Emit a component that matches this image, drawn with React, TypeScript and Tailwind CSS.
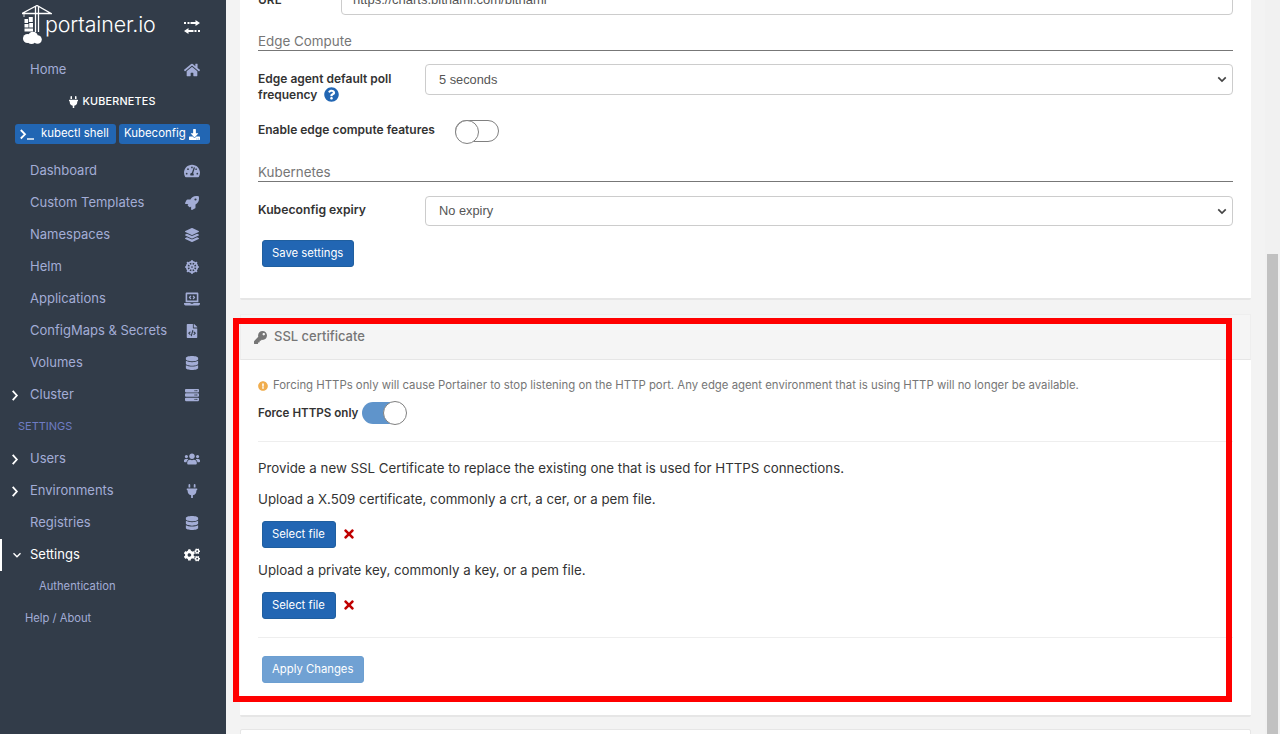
import type { ReactNode } from "react";
import {
    FaCogs,
    FaDatabase,
    FaDharmachakra,
    FaDownload,
    FaExclamationCircle,
    FaFileCode,
    FaHome,
    FaKey,
    FaLaptopCode,
    FaLayerGroup,
    FaPlug,
    FaQuestionCircle,
    FaRocket,
    FaServer,
    FaTachometerAlt,
    FaTimes,
    FaUsers,
} from "react-icons/fa";

function Logo() {
    return (
        <div className="flex h-[54px] items-start">
            <svg viewBox="0 0 30 40" className="ml-[22px] mt-[5px] h-[40px] w-[30px] text-white">
                <path d="M0 8.500 15 .5l14 8H0Z" fill="none" stroke="currentColor" strokeWidth="1.300" />
                <path d="M13.500 1v26 M16.500 1v26" fill="none" stroke="currentColor" strokeWidth="1.300" />
                <path d="M2 9v3" stroke="currentColor" strokeWidth="0.800" />
                <path d="M2.500 14h3.500v4H2.500z M6.800 12h4v5h-4z M2.500 19h4v3.500h-4z M7.200 18h3.800v4.500H7.200z M2.500 23.500h8.500V26.500H2.500z" fill="currentColor" />
                <circle cx="5.500" cy="33.500" r="4.500" fill="currentColor" />
                <circle cx="11" cy="31.500" r="4.800" fill="currentColor" />
                <circle cx="15.500" cy="34.500" r="4.300" fill="currentColor" />
                <circle cx="9.500" cy="35" r="4" fill="currentColor" />
            </svg>
            <span className="ml-[-7px] mt-[11px] w-[114px] text-[21.400px] leading-[26px] font-light tracking-[-0.100px] text-white">
                portainer.io
            </span>
            <svg viewBox="0 0 16 14" className="ml-[25px] mt-[20px] h-[14px] w-[16px] text-white">
                <path d="M0 3h2 M3.500 3h2 M6.500 3h6 M3.500 11h6 M10.500 11h2 M14 11h2" stroke="currentColor" strokeWidth="2.200" />
                <path d="M11.500 0 16 3 11.500 6Z M4.500 8 0 11 4.500 14Z" fill="currentColor" />
            </svg>
        </div>
    );
}

function NavRow({
    label,
    icon,
    caret,
    active,
}: {
    label: string;
    icon: ReactNode;
    caret?: "right" | "down";
    active?: boolean;
}) {
    return (
        <div
            className={
                active
                    ? "relative flex h-8 items-center border-l-2 border-white pl-[28px] pr-[26px] text-[13px] text-white"
                    : "relative flex h-8 items-center pl-[30px] pr-[26px] text-[13px] text-[#a3add6]"
            }
        >
            {caret === "right" && (
                <svg viewBox="0 0 8 12" className="absolute left-[11px] h-[11px] w-[8px]">
                    <path d="M1.500 1 6 6l-4.500 5" fill="none" stroke="white" strokeWidth="2" />
                </svg>
            )}
            {caret === "down" && (
                <svg viewBox="0 0 10 8" className="absolute left-[10px] h-[7px] w-[10px]">
                    <path d="m1 1.500 4 4 4-4" fill="none" stroke="white" strokeWidth="1.600" />
                </svg>
            )}
            <span className="flex-1">{label}</span>
            <span className={active ? "flex w-4 justify-center text-white" : "flex w-4 justify-center text-[#a3add6]"}>{icon}</span>
        </div>
    );
}

function Sidebar() {
    const icon = "h-[14px] w-[14px] shrink-0";
    const wide = "h-4 w-4 shrink-0";
    return (
        <aside className="h-[734px] w-[226px] shrink-0 bg-[#323c49]">
            <Logo />
            <NavRow label="Home" icon={<FaHome className={wide} />} />
            <div className="flex h-8 items-center justify-center gap-[4px] pr-[1px] text-[10.800px] font-medium tracking-[0.200px] text-white">
                <FaPlug className="h-[12px] w-[9px]" />
                KUBERNETES
            </div>
            <div className="flex h-[37px] items-start gap-[3px] pl-[15px] pt-[6px]">
                <div className="flex h-[20px] w-[101px] items-center rounded-[3px] bg-[#2266b3] pl-[5px] text-[11.400px] text-white">
                    <svg viewBox="0 0 14 11" className="mr-[7px] h-[11px] w-[14px]">
                        <path d="m.8 1 4.200 4.300L.8 9.500" fill="none" stroke="white" strokeWidth="1.800" />
                        <path d="M7 10h7" stroke="white" strokeWidth="1.400" />
                    </svg>
                    kubectl shell
                </div>
                <div className="flex h-[20px] w-[91px] items-center rounded-[3px] bg-[#2266b3] pl-[5px] text-[11.400px] text-white">
                    Kubeconfig
                    <FaDownload className="ml-[3px] h-[11px] w-[11px]" />
                </div>
            </div>
            <NavRow label="Dashboard" icon={<FaTachometerAlt className={wide} />} />
            <NavRow label="Custom Templates" icon={<FaRocket className={icon} />} />
            <NavRow label="Namespaces" icon={<FaLayerGroup className={icon} />} />
            <NavRow label="Helm" icon={<FaDharmachakra className={icon} />} />
            <NavRow label="Applications" icon={<FaLaptopCode className={wide} />} />
            <NavRow label="ConfigMaps & Secrets" icon={<FaFileCode className={icon} />} />
            <NavRow label="Volumes" icon={<FaDatabase className={icon} />} />
            <NavRow label="Cluster" caret="right" icon={<FaServer className={icon} />} />
            <div className="flex h-8 items-center pb-[2px] pl-[18px] text-[11px] text-[#6f7cc4]">SETTINGS</div>
            <NavRow label="Users" caret="right" icon={<FaUsers className={wide} />} />
            <NavRow label="Environments" caret="right" icon={<FaPlug className={icon} />} />
            <NavRow label="Registries" icon={<FaDatabase className={icon} />} />
            <NavRow label="Settings" caret="down" active icon={<FaCogs className={wide} />} />
            <div className="flex h-8 items-center pb-[2px] pl-[39px] text-[11.200px] text-[#a3add6]">Authentication</div>
            <div className="flex h-8 items-center pb-[2px] pl-[25px] text-[11.200px] text-[#a3add6]">Help / About</div>
        </aside>
    );
}

function SectionTitle({ children, className }: { children: ReactNode; className: string }) {
    return (
        <div className={`${className} flex h-[18px] items-center border-b border-[#777777] pb-[1px] text-[13.400px] text-[#767676]`}>
            {children}
        </div>
    );
}

function SelectBox({ value, short }: { value: string; short?: boolean }) {
    return (
        <div
            className={
                short
                    ? "flex h-[30px] w-[808px] items-center justify-between rounded-[4px] border border-[#cccccc] pl-[13px] pr-[5px] font-['Liberation_Sans',sans-serif] text-[12.800px] text-[#555555]"
                    : "flex h-[31px] w-[808px] items-center justify-between rounded-[4px] border border-[#cccccc] pl-[13px] pr-[5px] font-['Liberation_Sans',sans-serif] text-[12.800px] text-[#555555]"
            }
        >
            {value}
            <svg viewBox="0 0 12 8" className="h-[7px] w-[10px]">
                <path d="m1.500 1.500 4.500 4.500 4.500-4.500" fill="none" stroke="#444444" strokeWidth="2" />
            </svg>
        </div>
    );
}

function BlueButton({ children, muted }: { children: ReactNode; muted?: boolean }) {
    return (
        <div
            className={
                muted
                    ? "flex h-[27px] w-fit items-center rounded-[3px] border border-[#6c9fd1] bg-[#70a1d3] pl-[9px] pr-[10px] text-[11.300px] text-white"
                    : "flex h-[27px] w-fit items-center rounded-[3px] border border-[#205f9f] bg-[#2266b3] pl-[9px] pr-[10px] text-[11.300px] text-white"
            }
        >
            {children}
        </div>
    );
}

function SettingsCard() {
    return (
        <section className="h-[316px] rounded-[2px] border-b-2 border-[#e6e6e6] bg-white px-[18px]">
            <div className="-mt-[16px] flex h-[31px] items-center">
                <span className="w-[83px] text-[12px] font-semibold text-[#333333]">URL</span>
                <div className="flex h-[31px] w-[892px] items-center rounded-[4px] border border-[#cccccc] pl-[11px] font-['Liberation_Sans',sans-serif] text-[13px] text-[#555555]">
                    https://charts.bitnami.com/bitnami
                </div>
            </div>
            <SectionTitle className="mt-[18px]">Edge Compute</SectionTitle>
            <div className="mt-[13px] flex items-start">
                <div className="w-[167px] pt-[7px] text-[12px] leading-[16px] font-semibold text-[#333333]">
                    Edge agent default poll
                    <div className="flex items-center gap-[7px]">
                        frequency
                        <FaQuestionCircle className="mb-[1px] h-[15px] w-[15px] text-[#2266b3]" />
                    </div>
                </div>
                <SelectBox value="5 seconds" />
            </div>
            <div className="mt-[16px] flex h-[24px] items-center">
                <span className="w-[197px] pb-[2px] text-[12px] font-semibold text-[#333333]">Enable edge compute features</span>
                <div className="relative h-[22px] w-[44px] rounded-full border border-[#808080] bg-white">
                    <div className="absolute -left-px -top-px h-[24px] w-[24px] rounded-full border border-[#808080] bg-white" />
                </div>
            </div>
            <SectionTitle className="mt-[21px]">Kubernetes</SectionTitle>
            <div className="mt-[14px] flex items-center">
                <span className="w-[167px] pb-[2px] text-[12.200px] font-semibold text-[#333333]">Kubeconfig expiry</span>
                <SelectBox value="No expiry" short />
            </div>
            <div className="mt-[14px] pl-1">
                <BlueButton>Save settings</BlueButton>
            </div>
        </section>
    );
}

function SslCard() {
    return (
        <section className="relative mt-[14px] h-[403px] rounded-[2px] border-b-2 border-[#e6e6e6] bg-white">
            <div className="flex h-[46px] items-center gap-[7px] border border-b-[#e6e6e6] border-x-[#eeeeee] border-t-[#eeeeee] bg-[#f5f5f5] pl-[13px] text-[13px] font-medium text-[#767676]">
                <FaKey className="h-[13px] w-[13px]" />
                SSL certificate
            </div>
            <div className="px-[18px]">
                <div className="mt-[17px] flex h-[18px] items-center gap-[5px] text-[11.360px] text-[#767676]">
                    <FaExclamationCircle className="h-[10px] w-[10px] text-[#f0ad4e]" />
                    Forcing HTTPs only will cause Portainer to stop listening on the HTTP port. Any edge agent environment that is using HTTP will no longer be available.
                </div>
                <div className="mt-[6px] flex h-[24px] items-center gap-[4px] text-[11.600px] font-semibold text-[#333333]">
                    <span className="pt-[1px]">Force HTTPS only</span>
                    <div className="relative h-[22px] w-[44px] rounded-full bg-[#5f94cb]">
                        <div className="absolute -right-px -top-px h-[24px] w-[24px] rounded-full border border-[#808080] bg-white" />
                    </div>
                </div>
                <div className="mt-[16px] border-t border-[#eeeeee]" />
                <p className="mt-[17px] text-[13.300px] leading-[18px] text-[#333333]">
                    Provide a new SSL Certificate to replace the existing one that is used for HTTPS connections.
                </p>
                <p className="mt-[13px] text-[13.300px] leading-[18px] text-[#333333]">
                    Upload a X.509 certificate, commonly a crt, a cer, or a pem file.
                </p>
                <div className="mt-[13px] flex items-center gap-[8px] pl-1">
                    <BlueButton>Select file</BlueButton>
                    <FaTimes className="mb-[2px] h-[14px] w-[10px] text-[#c00000]" />
                </div>
                <p className="mt-[13px] text-[13.300px] leading-[18px] text-[#333333]">
                    Upload a private key, commonly a key, or a pem file.
                </p>
                <div className="mt-[13px] flex items-center gap-[8px] pl-1">
                    <BlueButton>Select file</BlueButton>
                    <FaTimes className="mb-[2px] h-[14px] w-[10px] text-[#c00000]" />
                </div>
                <div className="mt-[18px] border-t border-[#eeeeee]" />
                <div className="mt-[18px] pl-1">
                    <BlueButton muted>Apply Changes</BlueButton>
                </div>
            </div>
            {/* red annotation frame from the screenshot */}
            <div className="pointer-events-none absolute -left-[7px] top-[4px] h-[384px] w-[999px] border-[6px] border-[#ff0000]" />
        </section>
    );
}

function Scrollbar() {
    return (
        <div className="h-[734px] w-[15px] shrink-0 bg-[#f1f1f1] px-[2px] pt-[254px]">
            <div className="h-full bg-[#c1c1c1]" />
        </div>
    );
}

export default function App() {
    return (
        <div className="flex h-[734px] w-[1280px] overflow-hidden bg-[#f3f3f3] font-['Inter',sans-serif]">
            <Sidebar />
            <main className="h-[734px] w-[1039px] overflow-hidden px-[14px]">
                <SettingsCard />
                <SslCard />
                <div className="mt-[12px] h-[20px] rounded-[2px] border border-[#e6e6e6] bg-white" />
            </main>
            <Scrollbar />
        </div>
    );
}
